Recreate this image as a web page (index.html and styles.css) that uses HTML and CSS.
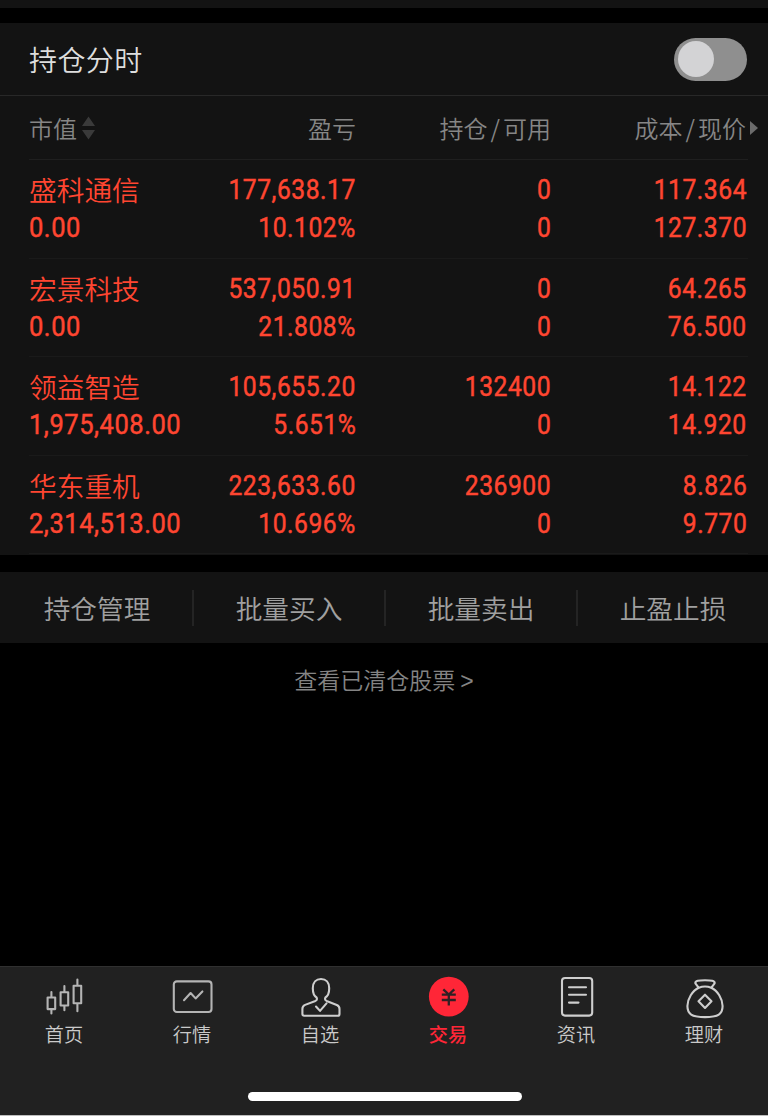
FILE: index.html
```html
<!DOCTYPE html>
<html lang="zh-CN">
<head>
<meta charset="utf-8">
<title>持仓</title>
<link rel="stylesheet" href="styles.css">
</head>
<body>
<div class="app">
  <div class="strip"></div>
  <section class="positions">
    <div class="title-row">
      <h1 class="title">持仓分时</h1>
      <div class="switch"><div class="knob"></div></div>
    </div>
    <div class="grid head">
      <div class="sort">市值<svg class="sort-icon" width="13" height="24" viewBox="0 0 13 24"><path d="M6.5 0.5 13 10H0zM6.5 23.5 13 14H0z" fill="#3a3a3a"/></svg></div>
      <div>盈亏</div>
      <div>持仓<i class="slash">/</i>可用</div>
      <div class="last">成本<i class="slash">/</i>现价<svg class="more" width="8" height="14" viewBox="0 0 8 14"><path d="M0 0 8 7 0 14z" fill="#6c6c6c"/></svg></div>
    </div>
    <div class="grid row">
      <div class="name">盛科通信</div><div class="num">177,638.17</div><div class="num">0</div><div class="num">117.364</div>
      <div class="num left">0.00</div><div class="num">10.102%</div><div class="num">0</div><div class="num">127.370</div>
    </div>
    <div class="grid row">
      <div class="name">宏景科技</div><div class="num">537,050.91</div><div class="num">0</div><div class="num">64.265</div>
      <div class="num left">0.00</div><div class="num">21.808%</div><div class="num">0</div><div class="num">76.500</div>
    </div>
    <div class="grid row">
      <div class="name">领益智造</div><div class="num">105,655.20</div><div class="num">132400</div><div class="num">14.122</div>
      <div class="num left">1,975,408.00</div><div class="num">5.651%</div><div class="num">0</div><div class="num">14.920</div>
    </div>
    <div class="grid row">
      <div class="name">华东重机</div><div class="num">223,633.60</div><div class="num">236900</div><div class="num">8.826</div>
      <div class="num left">2,314,513.00</div><div class="num">10.696%</div><div class="num">0</div><div class="num">9.770</div>
    </div>
  </section>
  <nav class="actions">
    <div class="action">持仓管理</div><div class="action">批量买入</div><div class="action">批量卖出</div><div class="action">止盈止损</div>
  </nav>
  <div class="cleared">查看已清仓股票 <span class="gt">&gt;</span></div>
  <footer class="tabbar">
    <div class="tabs">
      <div class="tab">
        <svg class="icon dim" viewBox="-.8 0 44 44"><path d="M4.8 17.5h7.6v11.600H4.800zM8.600 12v5.500M8.600 29v4.500M17.800 12.200h7.600v13.300h-7.600zM21.600 6v6M21.600 25.500v4.800M30.800 5.800h7.600v17.400h-7.600zM34.600-.5v6M34.600 23.200v8"/></svg>
        <span>首页</span>
      </div>
      <div class="tab">
        <svg class="icon dim" viewBox="-.8 0 44 44"><rect x="3" y="1.400" width="37.700" height="30.600" rx="3"/><path d="m13.200 20.200 6.600-7.200 5 5.400 6.800-7"/></svg>
        <span>行情</span>
      </div>
      <div class="tab">
        <svg class="icon" viewBox="0 0 44 44"><path d="M18.600 17.500C15.700 15.800 14.800 12 14.800 8.300 14.800 2.500 18-1 23-1s8.200 3.500 8.200 9.300c0 3.700-.9 7.500-3.800 9.200-.8 1.700-.2 2.800 1.200 3.400l10.200 4c1.700.7 2.700 2 2.700 4v5.100c0 1.200-.6 1.800-1.800 1.800H6.200c-1.200 0-1.800-.6-1.800-1.800v-5.100c0-2 1-3.300 2.700-4l10.300-4c1.400-.6 2-1.700 1.200-3.400z"/><path d="m18 26.500 4 4.400 6.500-7.500"/></svg>
        <span>自选</span>
      </div>
      <div class="tab active">
        <svg class="icon" viewBox="0 0 44 44"><circle class="coin" cx="22.800" cy="16.600" r="19.900"/><path class="yen" d="m17.300 9.300 5.500 5.200 5.500-5.200M15.800 14.700h14M15.800 20h14M22.800 14.500v11"/></svg>
        <span>交易</span>
      </div>
      <div class="tab">
        <svg class="icon" viewBox="0 0 44 44"><rect x="8" y="-2" width="30.200" height="37.600" rx="3"/><path d="M15 7.300h17M15 14.800h17M15 22.600h9.500"/></svg>
        <span>资讯</span>
      </div>
      <div class="tab">
        <svg class="icon" viewBox="0 0 44 44"><path d="m16.800 7.800-3.400-4.500C12.800.6 17 .2 23 .2s10.200.4 9.600 3.100l-3.400 4.500M16.800 7.800C10.500 10.500 5.400 19 5.400 26.100c0 7.800 4.200 11 17.600 11s17.600-3.200 17.600-11c0-7.100-5.100-15.600-11.400-18.300-4.100-1.700-8.300-1.700-12.400 0z"/><path d="m23 14.700 6.500 6.600-6.500 6.600-6.500-6.600z"/></svg>
        <span>理财</span>
      </div>
    </div>
    <div class="home"></div>
  </footer>
</div>
</body>
</html>
```
FILE: styles.css
```css
* { box-sizing: border-box; }
body { margin: 0; background: #000; }
.app {
  display: flex; flex-direction: column; width: 768px; height: 1116px;
  overflow: hidden; color: #868686;
  font-family: "Noto Sans CJK SC", sans-serif; font-weight: 350;
}
.strip { height: 8px; flex: none; background: #131313; margin-bottom: 15px; }
.positions { height: 531.5px; flex: none; background: #131313; }
.title-row {
  display: flex; align-items: center; justify-content: space-between;
  height: 73px; padding: 0 21px 0 29px; border-bottom: 1px solid #282828;
}
.title { margin: 0; font-size: 28px; line-height: 40px; font-weight: 350; color: #dedede; letter-spacing: .4px; }
.switch { width: 73px; height: 43px; padding: 3.5px; border-radius: 22px; background: #8f8f8f; }
.knob { width: 36px; height: 36px; border-radius: 50%; background: #d3d3d5; }
.grid {
  display: grid; grid-template-columns: 160px 167px 195px 196px;
  margin: 0 20px 0 29px; text-align: right; white-space: nowrap;
}
.head { height: 64px; align-items: center; font-size: 24px; line-height: 36px; border-bottom: 1px solid #1f1f1f; }
.slash { font-style: normal; margin: 0 3px; }
.sort { display: flex; align-items: center; gap: 5px; }
.last { position: relative; padding-right: 1px; }
.more { position: absolute; right: -11px; top: 11px; }
.row {
  height: 98.5px; grid-template-rows: 38px 38px; padding-top: 11px;
  border-bottom: 1px solid #1a1a1a; color: #ff4631;
}
.name { text-align: left; font-size: 27.7px; line-height: 36px; }
.num {
  justify-self: end; font-family: Roboto, sans-serif; font-weight: 400; font-size: 28px;
  letter-spacing: .6px; line-height: 37px; -webkit-text-stroke: .5px #ff4631;
  transform: scaleX(.88); transform-origin: right center;
}
.num.left { justify-self: start; transform: scaleX(.91); transform-origin: left center; }
.actions { display: grid; grid-template-columns: repeat(4, 192px); height: 71.5px; flex: none; margin-top: 17px; background: #131313; }
.action {
  position: relative; display: flex; align-items: center; justify-content: center; padding: 0 0 0 2px;
  font-size: 26.7px; color: #a0a0a0;
}
.action + .action::before { content: ""; position: absolute; left: 0; top: 18px; width: 2px; height: 36px; background: #242424; }
.cleared { margin-top: 19px; line-height: 34px; font-size: 23px; text-align: center; color: #848484; }
.gt { font-family: "Liberation Sans", sans-serif; }
.tabbar { height: 150px; flex: none; margin-top: auto; background: #212121; border-top: 1px solid #303030; border-bottom: 1px solid #bdbdbd; }
.tabs { display: grid; grid-template-columns: repeat(6, 128px); height: 125px; padding-top: 13px; }
.tab { display: flex; flex-direction: column; align-items: center; font-size: 19.2px; line-height: 28px; color: #cacaca; }
.icon { width: 44px; height: 44px; margin-bottom: -4px; flex: none; overflow: visible; fill: none; stroke: #cecece; stroke-width: 2.1; stroke-linejoin: round; stroke-linecap: round; }
.dim { stroke: #b4b4b4; }
.active { color: #ff2637; font-weight: 500; }
.coin { fill: #ff2637; stroke: none; }
.yen { stroke: #302024; stroke-width: 2.3; stroke-linecap: butt; }
.home { width: 274px; height: 9px; margin: 0 auto; border-radius: 5px; background: #fff; transform: translate(1px, 0); }
```
